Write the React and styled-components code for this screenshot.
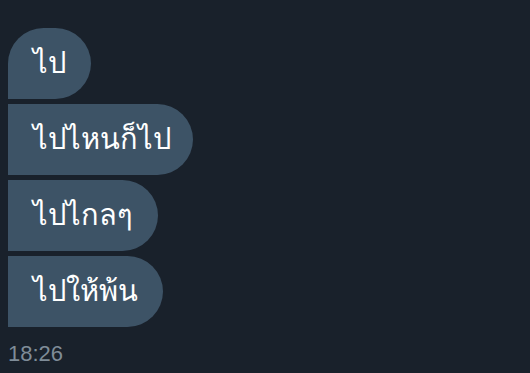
import styled, { createGlobalStyle } from "styled-components"

const GlobalStyle = createGlobalStyle`
    html, body {
        margin: 0;
        padding: 0;
        background: #19212b;
    }
    body {
        font-family: "Noto Sans", "DejaVu Sans", sans-serif;
    }
`;

const Thread = styled.div`
    display: flex;
    flex-direction: column;
    align-items: flex-start;
    gap: 5px;
    padding: 28px 8px 0 8px;
`;

const Bubble = styled.div`
    background: #3d5366;
    color: #ffffff;
    height: 71px;
    display: flex;
    align-items: center;
    padding: 0 ${p => p.tight ? "22px" : "25px"} 2px 25px;
    font-size: 29px;
    border-radius: ${p => p.first ? "36px 36px 36px 0" : "0 36px 36px 0"};
    box-sizing: border-box;
`;

const Time = styled.div`
    color: #7f8c98;
    font-family: "Liberation Sans", Arial, sans-serif;
    font-size: 22px;
    margin-top: 9px;
`;

const messages = ["ไป", "ไปไหนก็ไป", "ไปไกลๆ", "ไปให้พ้น"];

const App = () => {
    return <>
        <GlobalStyle />
        <Thread>
            {messages.map((m, i) => <Bubble key={i} first={i === 0} tight={i === 1}>{m}</Bubble>)}
            <Time>18:26</Time>
        </Thread>
    </>
}

export default App
